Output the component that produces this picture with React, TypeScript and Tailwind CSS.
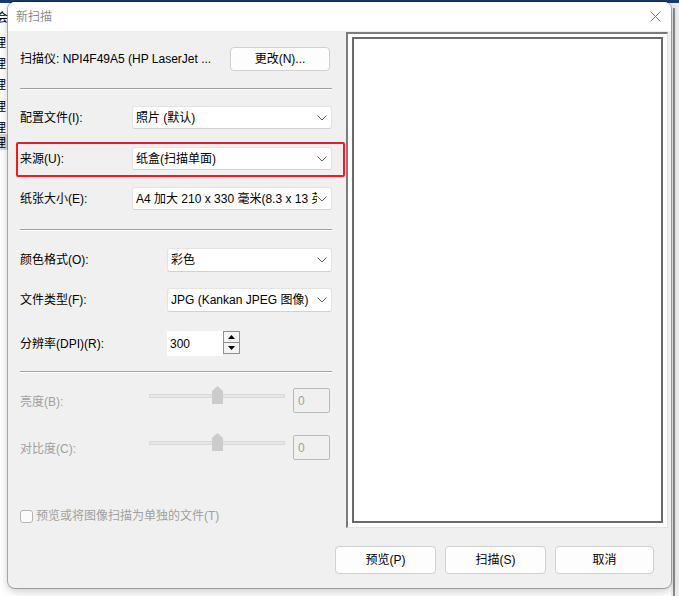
import React from "react";

const FONT = "font-['Liberation_Sans','Noto_Sans_CJK_SC',sans-serif]";

function Chevron() {
	return (
		<svg width="10" height="6" viewBox="0 0 10 6" className="shrink-0">
			<path d="M0.5 0.5l4.5 4.5 4.5-4.5" stroke="#5c5c5c" strokeWidth="1" fill="none" />
		</svg>
	);
}

function Combo({ text, className }: { text: string; className: string }) {
	return (
		<div
			className={`flex h-[23px] items-center rounded-[3px] border border-[#e3e3e3] border-b-[#d2d2d2] bg-white pl-[3px] pr-[4px] ${className}`}
		>
			<span className="min-w-0 flex-1 overflow-hidden whitespace-nowrap">{text}</span>
			<Chevron />
		</div>
	);
}

function Separator({ className }: { className: string }) {
	return <div className={`w-[312px] border-t border-t-[#a0a0a0] border-b border-b-white ${className}`} />;
}

function Slider({ label, className }: { label: string; className: string }) {
	return (
		<div className={`flex items-start ${className}`}>
			<span className="mt-[6px] w-[129px] leading-4 text-[#a0a0a0]">{label}</span>
			<div className="relative h-[25px] w-[136px]">
				<div className="absolute left-0 top-[6px] h-[4px] w-[136px] border border-[#d9d9d9] bg-[#e6e6e6]" />
				<svg width="11" height="18" viewBox="0 0 11 18" className="absolute left-[63px] top-[-2px]">
					<path d="M0 5L5.5 0L11 5V18H0Z" fill="#cccccc" />
				</svg>
			</div>
			<div className="ml-[8px] flex h-[25px] w-[37px] items-center rounded-[2px] border border-[#b9b9b9] pl-[4px] text-[#a0a0a0]">
				0
			</div>
		</div>
	);
}

function Button({ label, className }: { label: string; className: string }) {
	return (
		<div
			className={`flex items-center justify-center rounded-[4px] border border-[#d0d0d0] bg-[#fdfdfd] ${className}`}
		>
			{label}
		</div>
	);
}

export default function App() {
	const bgRows = [43, 64, 85, 107, 128, 143];
	return (
		<div className={`relative h-[596px] w-[679px] overflow-hidden bg-white text-[12px] text-black ${FONT}`}>
			{/* window behind the dialog */}
			<div className="absolute left-0 top-0 h-[3px] w-[679px] bg-[#1d3b66]" />
			<div className="absolute left-0 top-[134px] h-[16px] w-[8px] bg-[#d9d9d9]" />
			<span className="absolute left-[-4px] top-[10px] leading-4">会</span>
			{bgRows.map((y, i) => (
				<span key={i} className="absolute left-[-6px] leading-4" style={{ top: y - 8 }}>
					理
				</span>
			))}
			<div className="absolute left-[671px] top-[3px] h-[593px] w-[8px] bg-[#ececec]" />
			<div className="absolute left-[673px] top-[8px] h-[588px] w-[2px] bg-[#8a8a8a]" />

			{/* dialog */}
			<div className="absolute left-[8px] top-[2px] flex h-[586px] w-[663px] flex-col overflow-hidden rounded-[7px] bg-[#f0f0f0] shadow-[0_0_0_1px_rgba(0,0,0,0.28),0_3px_10px_rgba(0,0,0,0.22)]">
				<div className="flex h-[29px] items-center justify-between bg-white pl-[8px] pr-[10px]">
					<span className="text-[#8c8c8c]">新扫描</span>
					<svg width="11" height="11" viewBox="0 0 11 11">
						<path d="M0.5 0.5L10.5 10.5M10.5 0.5L0.5 10.5" stroke="#7a7a7a" strokeWidth="1" />
					</svg>
				</div>

				<div className="flex">
					<div className="flex w-[338px] flex-col pl-[12px]">
						<div className="mt-[16px] flex h-[24px] items-center">
							<span className="w-[210px] whitespace-nowrap">扫描仪: NPI4F49A5 (HP LaserJet ...</span>
							<Button label="更改(N)..." className="h-[24px] w-[100px]" />
						</div>
						<Separator className="mt-[17px]" />

						<div className="mt-[16px] flex h-[23px] items-center">
							<span className="w-[112px]">配置文件(I):</span>
							<Combo text="照片 (默认)" className="w-[200px]" />
						</div>

						<div className="relative mt-[18px] flex h-[23px] items-center">
							<span className="w-[112px]">来源(U):</span>
							<Combo text="纸盒(扫描单面)" className="w-[200px]" />
							<div className="absolute left-[-4px] top-[-5px] h-[35px] w-[329px] rounded-[2px] border-2 border-[#ec1c24]" />
						</div>

						<div className="mt-[17px] flex h-[23px] items-center">
							<span className="w-[112px]">纸张大小(E):</span>
							<Combo text="A4 加大 210 x 330 毫米(8.3 x 13 英寸)" className="w-[200px]" />
						</div>
						<Separator className="mt-[19px]" />

						<div className="mt-[17px] flex h-[24px] items-center">
							<span className="w-[147px]">颜色格式(O):</span>
							<Combo text="彩色" className="h-[24px] w-[165px]" />
						</div>

						<div className="mt-[16px] flex h-[24px] items-center">
							<span className="w-[147px]">文件类型(F):</span>
							<Combo text="JPG (Kankan JPEG 图像)" className="h-[24px] w-[165px]" />
						</div>

						<div className="mt-[19px] flex h-[25px] items-center">
							<span className="w-[147px]">分辨率(DPI)(R):</span>
							<div className="flex h-[25px] w-[56px] items-center bg-white pl-[3px]">300</div>
							<div className="flex h-[23px] w-[17px] flex-col self-start border border-[#8f8f8f] bg-[#f4f4f4]">
								<div className="flex flex-1 items-center justify-center border-b border-[#8f8f8f]">
									<svg width="7" height="4" viewBox="0 0 7 4">
										<path d="M0 4L3.5 0L7 4Z" fill="#000" />
									</svg>
								</div>
								<div className="flex flex-1 items-center justify-center">
									<svg width="7" height="4" viewBox="0 0 7 4">
										<path d="M0 0L3.5 4L7 0Z" fill="#000" />
									</svg>
								</div>
							</div>
						</div>
						<Separator className="mt-[15px]" />

						<Slider label="亮度(B):" className="mt-[15px]" />
						<Slider label="对比度(C):" className="mt-[22px]" />

						<div className="mt-[48px] flex h-[16px] items-center">
							<div className="h-[13px] w-[13px] rounded-[3px] border border-[#b4b4b4] bg-[#fbfbfb]" />
							<span className="ml-[3px] text-[#a0a0a0]">预览或将图像扫描为单独的文件(T)</span>
						</div>
					</div>

					<div className="mt-[1px] h-[496px] w-[322px] border-l-2 border-t-2 border-r border-b border-l-[#7c7c7c] border-t-[#7c7c7c] border-r-[#e4e4e4] border-b-[#e4e4e4] bg-white pb-[4px] pl-[4px] pr-[4px] pt-[3px]">
						<div className="h-full w-full border-2 border-[#6a6a6a] bg-white" />
					</div>
				</div>

				<div className="mt-[18px] flex justify-end gap-[9px] pr-[17px]">
					<Button label="预览(P)" className="h-[28px] w-[101px]" />
					<Button label="扫描(S)" className="h-[28px] w-[101px]" />
					<Button label="取消" className="h-[28px] w-[99px]" />
				</div>
			</div>
		</div>
	);
}
